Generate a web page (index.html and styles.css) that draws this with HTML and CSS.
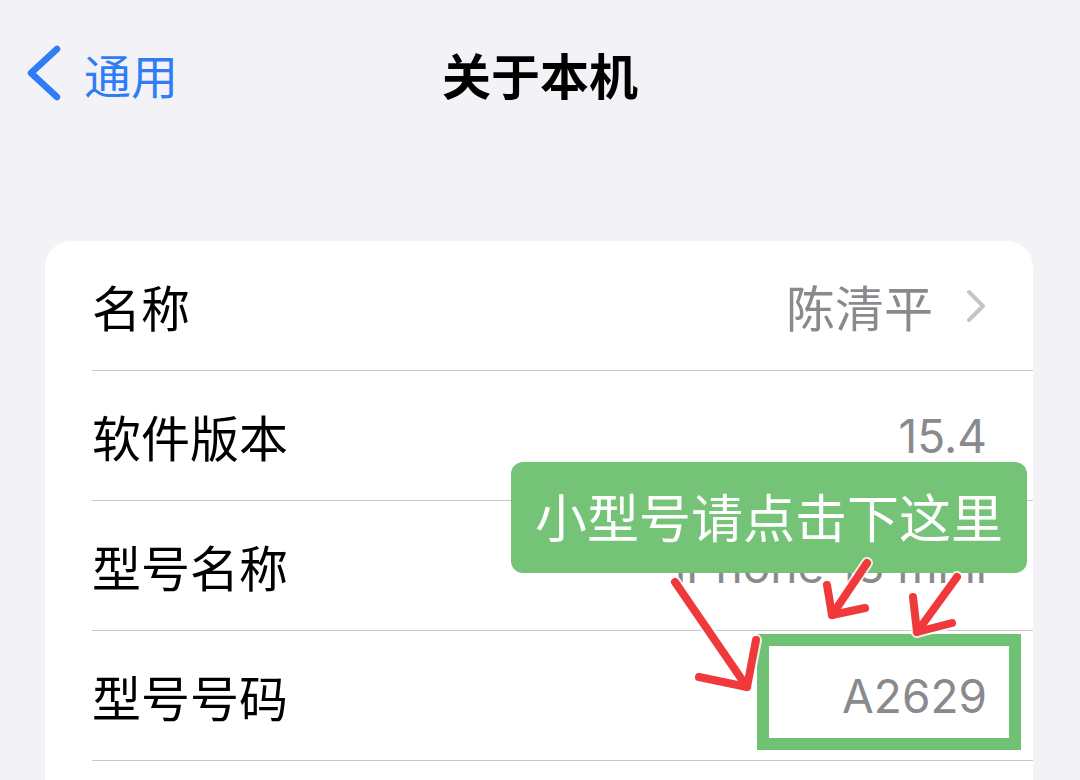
FILE: index.html
```html
<!DOCTYPE html>
<html lang="zh-CN">
<head>
<meta charset="utf-8">
<title>关于本机</title>
<link rel="stylesheet" href="styles.css">
</head>
<body>
<div class="screen">
  <header class="nav">
    <div class="back">
      <svg class="back-icon" width="38" height="56" viewBox="0 0 38 56">
        <polyline points="33,4 7,28 33,52" fill="none" stroke="#2f7df6" stroke-width="6.5" stroke-linecap="round" stroke-linejoin="round"/>
      </svg>
      <span class="back-label">通用</span>
    </div>
    <h1 class="title">关于本机</h1>
  </header>

  <section class="card">
    <div class="row">
      <div class="row-inner">
        <span class="label">名称</span>
        <span class="value">陈清平
          <svg class="chev" width="22" height="34" viewBox="0 0 22 34">
            <polyline points="4,3 18,17 4,31" fill="none" stroke="#c4c4c7" stroke-width="4" stroke-linecap="round" stroke-linejoin="round"/>
          </svg>
        </span>
      </div>
    </div>
    <div class="row">
      <div class="row-inner">
        <span class="label">软件版本</span>
        <span class="value num">15.4</span>
      </div>
    </div>
    <div class="row">
      <div class="row-inner">
        <span class="label">型号名称</span>
        <span class="value num">iPhone 13 mini</span>
      </div>
    </div>
    <div class="row">
      <div class="row-inner">
        <span class="label">型号号码</span>
        <span class="value num">A2629</span>
      </div>
    </div>
    <div class="row">
      <div class="row-inner"></div>
    </div>
  </section>

  <div class="callout">小型号请点击下这里</div>
  <div class="highlight"></div>
  <svg class="arrows" width="1080" height="780" viewBox="0 0 1080 780">
    <g fill="none" stroke="#ffffff" stroke-width="12" stroke-linecap="round" stroke-linejoin="round" opacity="0.8">
      <polyline points="675,582 747,687"/>
      <polyline points="756,640 747,687 699,677"/>
      <polyline points="867,563 832,615"/>
      <polyline points="827,585 832,615 865,608"/>
      <polyline points="957,577 917,632"/>
      <polyline points="913,597 917,632 952,623"/>
    </g>
    <g fill="none" stroke="#f0393b" stroke-width="8" stroke-linecap="round" stroke-linejoin="round">
      <polyline points="675,582 747,687"/>
      <polyline points="756,640 747,687 699,677"/>
      <polyline points="867,563 832,615"/>
      <polyline points="827,585 832,615 865,608"/>
      <polyline points="957,577 917,632"/>
      <polyline points="913,597 917,632 952,623"/>
    </g>
  </svg>
</div>
</body>
</html>
```

FILE: styles.css
```css
html, body {
  margin: 0;
  padding: 0;
}

body {
  background: #f2f2f7;
  font-family: "Inter", "Noto Sans CJK SC", sans-serif;
  -webkit-font-smoothing: antialiased;
}

.screen {
  position: relative;
  width: 1080px;
  height: 780px;
  overflow: hidden;
  background: #f2f2f7;
}

.nav {
  position: relative;
  height: 156px;
  box-sizing: border-box;
  padding-bottom: 10px;
  display: flex;
  align-items: center;
  justify-content: center;
}

.back {
  position: absolute;
  left: 24px;
  top: 0;
  height: 146px;
  display: flex;
  align-items: center;
  gap: 22px;
}

.back-icon {
  display: block;
}

.back-label {
  font-family: "Noto Sans CJK SC", sans-serif;
  font-size: 47px;
  color: #2f7df6;
  line-height: 1;
}

.title {
  margin: 0;
  font-family: "Noto Sans CJK SC", sans-serif;
  font-size: 49px;
  font-weight: 700;
  color: #000;
  line-height: 1;
}

.card {
  margin: 85px 47px 0 45px;
  background: #ffffff;
  border-radius: 26px;
}

.row {
  padding-left: 47px;
}

.row-inner {
  height: 129px;
  border-bottom: 1px solid #c8c8cc;
  padding-right: 46px;
  display: flex;
  align-items: center;
  justify-content: space-between;
}

.label {
  font-family: "Noto Sans CJK SC", sans-serif;
  font-size: 49px;
  color: #000;
  line-height: 1;
}

.value {
  font-family: "Noto Sans CJK SC", sans-serif;
  font-size: 49px;
  color: #8a8a8e;
  line-height: 1;
  display: flex;
  align-items: center;
  gap: 32px;
}

.value.num {
  font-family: "Inter", "Noto Sans CJK SC", sans-serif;
  font-size: 46px;
}

.chev {
  display: block;
}

.callout {
  position: absolute;
  left: 511px;
  top: 462px;
  width: 516px;
  height: 111px;
  box-sizing: border-box;
  background: #74c377;
  border-radius: 12px;
  color: #ffffff;
  font-family: "Noto Sans CJK SC", sans-serif;
  font-size: 52px;
  line-height: 1;
  display: flex;
  align-items: center;
  justify-content: center;
  padding-bottom: 4px;
}

.highlight {
  position: absolute;
  left: 757px;
  top: 634px;
  width: 264px;
  height: 116px;
  box-sizing: border-box;
  border: 12px solid #6fc273;
}

.arrows {
  position: absolute;
  left: 0;
  top: 0;
}
```
